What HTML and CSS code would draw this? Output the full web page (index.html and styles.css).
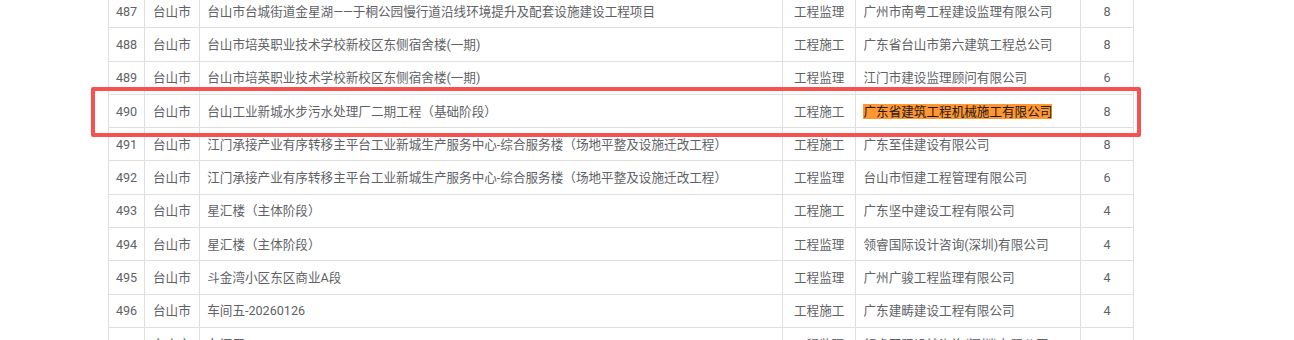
FILE: index.html
```html
<!DOCTYPE html>
<html lang="zh-CN">
<head>
<meta charset="utf-8">
<title>项目列表</title>
<link rel="stylesheet" href="styles.css">
</head>
<body>
<div class="view">
  <table class="grid">
    <colgroup>
      <col class="c-no"><col class="c-area"><col class="c-name"><col class="c-type"><col class="c-co"><col class="c-num">
    </colgroup>
    <tbody>
      <tr><td class="ctr">487</td><td class="ctr">台山市</td><td>台山市台城街道金星湖——于桐公园慢行道沿线环境提升及配套设施建设工程项目</td><td class="ctr">工程监理</td><td>广州市南粤工程建设监理有限公司</td><td class="ctr">8</td></tr>
      <tr><td class="ctr">488</td><td class="ctr">台山市</td><td>台山市培英职业技术学校新校区东侧宿舍楼(一期)</td><td class="ctr">工程施工</td><td>广东省台山市第六建筑工程总公司</td><td class="ctr">8</td></tr>
      <tr><td class="ctr">489</td><td class="ctr">台山市</td><td>台山市培英职业技术学校新校区东侧宿舍楼(一期)</td><td class="ctr">工程监理</td><td>江门市建设监理顾问有限公司</td><td class="ctr">6</td></tr>
      <tr><td class="ctr">490</td><td class="ctr">台山市</td><td>台山工业新城水步污水处理厂二期工程（基础阶段）</td><td class="ctr">工程施工</td><td><span class="hit">广东省建筑工程机械施工有限公司</span></td><td class="ctr">8</td></tr>
      <tr><td class="ctr">491</td><td class="ctr">台山市</td><td>江门承接产业有序转移主平台工业新城生产服务中心-综合服务楼（场地平整及设施迁改工程）</td><td class="ctr">工程施工</td><td>广东至佳建设有限公司</td><td class="ctr">8</td></tr>
      <tr><td class="ctr">492</td><td class="ctr">台山市</td><td>江门承接产业有序转移主平台工业新城生产服务中心-综合服务楼（场地平整及设施迁改工程）</td><td class="ctr">工程监理</td><td>台山市恒建工程管理有限公司</td><td class="ctr">6</td></tr>
      <tr><td class="ctr">493</td><td class="ctr">台山市</td><td>星汇楼（主体阶段）</td><td class="ctr">工程施工</td><td>广东坚中建设工程有限公司</td><td class="ctr">4</td></tr>
      <tr><td class="ctr">494</td><td class="ctr">台山市</td><td>星汇楼（主体阶段）</td><td class="ctr">工程监理</td><td>领睿国际设计咨询(深圳)有限公司</td><td class="ctr">4</td></tr>
      <tr><td class="ctr">495</td><td class="ctr">台山市</td><td>斗金湾小区东区商业A段</td><td class="ctr">工程监理</td><td>广州广骏工程监理有限公司</td><td class="ctr">4</td></tr>
      <tr><td class="ctr">496</td><td class="ctr">台山市</td><td>车间五-20260126</td><td class="ctr">工程施工</td><td>广东建畴建设工程有限公司</td><td class="ctr">4</td></tr>
      <tr><td class="ctr">497</td><td class="ctr">台山市</td><td>车间三</td><td class="ctr">工程监理</td><td>领睿国际设计咨询(深圳)有限公司</td><td class="ctr">4</td></tr>
    </tbody>
  </table>
  <div class="mark"></div>
</div>
</body>
</html>
```
FILE: styles.css
```css
html, body {
  margin: 0;
  padding: 0;
  background: #ffffff;
  overflow: hidden;
}

.view {
  position: relative;
  padding-left: 108px;
  margin-top: -6px;
  font-family: "Roboto", "Noto Sans CJK SC", sans-serif;
  font-size: 12.6px;
  color: #606266;
}

.grid {
  border-collapse: collapse;
  table-layout: fixed;
  width: 1025px;
}

.c-no { width: 36px; }
.c-area { width: 54.7px; }
.c-name { width: 583.6px; }
.c-type { width: 72.7px; }
.c-co { width: 225px; }
.c-num { width: 53px; }

.grid tr {
  height: 33.3px;
}

.grid td {
  border: 1px solid #dfdfdf;
  padding: 0 7.5px;
  white-space: nowrap;
  overflow: hidden;
  vertical-align: middle;
  line-height: 17px;
}

.grid td.ctr {
  text-align: center;
  padding: 0;
}

.hit {
  background: #ff9632;
  color: #1b1b1b;
}

.mark {
  position: absolute;
  left: 91px;
  top: 93px;
  width: 1050px;
  height: 50px;
  box-sizing: border-box;
  border: 4px solid #f85050;
  border-radius: 2px;
}
```
